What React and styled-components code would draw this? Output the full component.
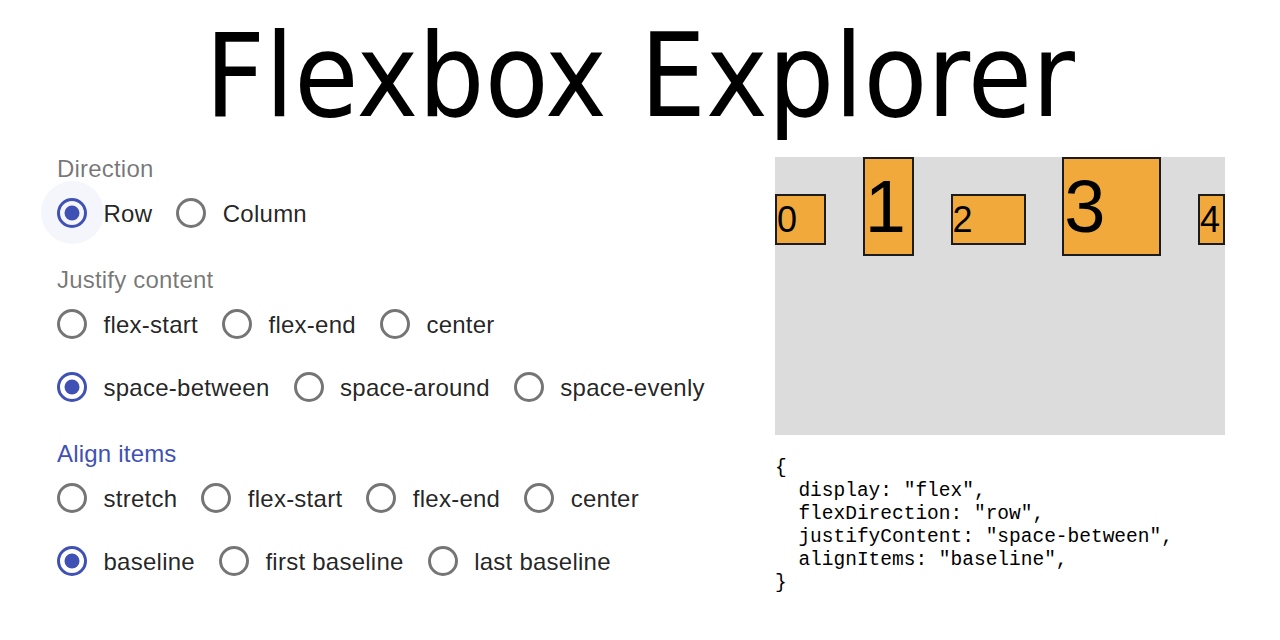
import React from "react";
import styled, { createGlobalStyle } from "styled-components";

const GlobalStyle = createGlobalStyle`
  html, body { margin: 0; padding: 0; background: #ffffff; }
  body { font-family: "Liberation Sans", Arial, sans-serif; color: rgba(0,0,0,0.87); }
`;

const Page = styled.div`
  width: 1280px;
  height: 640px;
  overflow: hidden;
`;

const Title = styled.h1`
  margin: 6px 0 0;
  text-align: center;
  font-family: "DejaVu Sans Condensed", "DejaVu Sans", sans-serif;
  font-stretch: condensed;
  font-weight: 400;
  font-size: 116px;
  line-height: 140px;
  color: #000;
  letter-spacing: 0.1px;
`;

const Main = styled.div`
  display: flex;
  justify-content: space-between;
  align-items: flex-start;
  padding: 11px 55px 0 57px;
`;

const Controls = styled.div`
  width: 686px;
  display: flex;
  flex-direction: column;
  gap: 24px;
`;

const Group = styled.div`
  display: flex;
  flex-direction: column;
`;

const GroupLabel = styled.div`
  font-family: "Liberation Sans", Arial, sans-serif;
  font-size: 24px;
  line-height: 1;
  height: 24px;
  letter-spacing: 0.2px;
  color: ${(p) => (p.$focused ? "#3f51b5" : "rgba(0,0,0,0.54)")};
`;

const Options = styled.div`
  display: flex;
  flex-wrap: wrap;
`;

const Option = styled.label`
  display: inline-flex;
  align-items: center;
  height: 63px;
  margin-left: -16.5px;
  margin-right: 24px;
  font-family: "Liberation Sans", Arial, sans-serif;
  font-size: 24px;
  color: rgba(0,0,0,0.87);
  cursor: pointer;
`;

const RadioBase = styled.span`
  width: 63px;
  height: 63px;
  flex: 0 0 63px;
  display: flex;
  align-items: center;
  justify-content: center;
  border-radius: 50%;
  background: ${(p) => (p.$hover ? "rgba(63,81,181,0.05)" : "transparent")};
  color: ${(p) => (p.$checked ? "#3f51b5" : "rgba(0,0,0,0.54)")};
`;

const OptionText = styled.span`
  line-height: 1.5;
  padding-top: 2px;
  letter-spacing: 0.25px;
  white-space: nowrap;
`;

const Preview = styled.div`
  width: 450px;
  display: flex;
  flex-direction: column;
`;

const Stage = styled.div`
  height: 278px;
  background: #dcdcdc;
  display: flex;
  flex-direction: row;
  justify-content: space-between;
  align-items: baseline;
`;

const Item = styled.div`
  box-sizing: border-box;
  width: ${(p) => p.$w}px;
  height: ${(p) => p.$h}px;
  padding-top: ${(p) => p.$pt}px;
  background: #f2a93b;
  border: 2px solid #1c1c1c;
  font-family: "Liberation Sans", Arial, sans-serif;
  font-size: ${(p) => p.$fs}px;
  line-height: 1;
  color: #000;
`;

const Code = styled.pre`
  margin: 22px 0 0;
  font-family: "Liberation Mono", "DejaVu Sans Mono", monospace;
  font-size: 19.5px;
  line-height: 23px;
  color: #000;
`;

function RadioIcon({ checked }) {
  return (
    <svg width="36" height="36" viewBox="0 0 24 24" aria-hidden="true">
      <circle cx="12" cy="12" r="9" fill="none" stroke="currentColor" strokeWidth="2" />
      {checked && <circle cx="12" cy="12" r="5" fill="currentColor" />}
    </svg>
  );
}

const groups = [
  {
    label: "Direction",
    options: ["Row", "Column"],
    value: "Row",
    hover: "Row",
  },
  {
    label: "Justify content",
    options: ["flex-start", "flex-end", "center", "space-between", "space-around", "space-evenly"],
    value: "space-between",
  },
  {
    label: "Align items",
    options: ["stretch", "flex-start", "flex-end", "center", "baseline", "first baseline", "last baseline"],
    value: "baseline",
    focused: true,
  },
];

const items = [
  { n: 0, w: 51, h: 51, fs: 36, pt: 6.5 },
  { n: 1, w: 51, h: 99, fs: 74, pt: 11.4 },
  { n: 2, w: 75, h: 51, fs: 36, pt: 6.5 },
  { n: 3, w: 99, h: 99, fs: 74, pt: 11.4 },
  { n: 4, w: 27, h: 51, fs: 36, pt: 6.5 },
];

const codeText = `{
  display: "flex",
  flexDirection: "row",
  justifyContent: "space-between",
  alignItems: "baseline",
}`;

export default function App() {
  return (
    <Page>
      <GlobalStyle />
      <Title>Flexbox Explorer</Title>
      <Main>
        <Controls>
          {groups.map((g) => (
            <Group key={g.label}>
              <GroupLabel $focused={g.focused}>{g.label}</GroupLabel>
              <Options>
                {g.options.map((o) => (
                  <Option key={o}>
                    <RadioBase $checked={o === g.value} $hover={o === g.hover}>
                      <RadioIcon checked={o === g.value} />
                    </RadioBase>
                    <OptionText>{o}</OptionText>
                  </Option>
                ))}
              </Options>
            </Group>
          ))}
        </Controls>
        <Preview>
          <Stage>
            {items.map((it) => (
              <Item key={it.n} $w={it.w} $h={it.h} $fs={it.fs} $pt={it.pt}>
                {it.n}
              </Item>
            ))}
          </Stage>
          <Code>{codeText}</Code>
        </Preview>
      </Main>
    </Page>
  );
}
